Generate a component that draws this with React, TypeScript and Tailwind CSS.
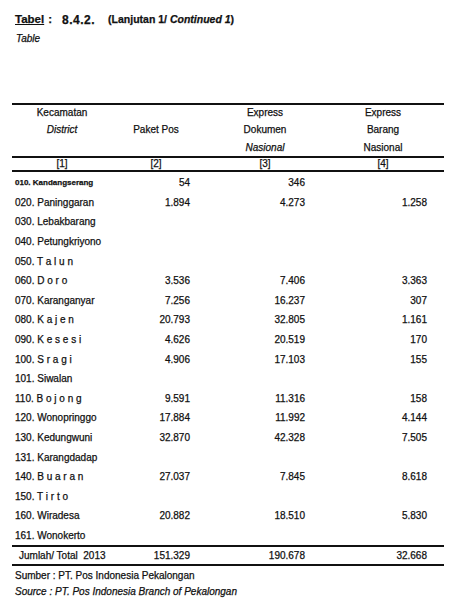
import React from "react";

const rows: [string, string, string, string][] = [
  ["020. Paninggaran", "1.894", "4.273", "1.258"],
  ["030. Lebakbarang", "", "", ""],
  ["040. Petungkriyono", "", "", ""],
  ["050. T a l u n", "", "", ""],
  ["060. D o r o", "3.536", "7.406", "3.363"],
  ["070. Karanganyar", "7.256", "16.237", "307"],
  ["080. K a j e n", "20.793", "32.805", "1.161"],
  ["090. K e s e s i", "4.626", "20.519", "170"],
  ["100. S r a g i", "4.906", "17.103", "155"],
  ["101. Siwalan", "", "", ""],
  ["110. B o j o n g", "9.591", "11.316", "158"],
  ["120. Wonopringgo", "17.884", "11.992", "4.144"],
  ["130. Kedungwuni", "32.870", "42.328", "7.505"],
  ["131. Karangdadap", "", "", ""],
  ["140. B u a r a n", "27.037", "7.845", "8.618"],
  ["150. T i r t o", "", "", ""],
  ["160. Wiradesa", "20.882", "18.510", "5.830"],
  ["161. Wonokerto", "", "", ""],
];

const grid = "grid grid-cols-[100px_88px_130px_106px]";

export default function App() {
  return (
    <div
      className="w-[460px] h-[610px] bg-white text-[#111] overflow-hidden [-webkit-text-stroke:0.25px_#111]"
      style={{ fontFamily: '"Liberation Sans", Arial, sans-serif' }}
    >
      <div className="pt-[12px] pl-[15px]">
        <div className="flex items-center h-[16px] font-bold">
          <span className="text-[11.5px] underline">Tabel</span>
          <span className="text-[11.5px] ml-[4px]">:</span>
          <span className="text-[12px] ml-[10px] tracking-[0.5px]">8.4.2.</span>
          <span className="text-[10.5px] ml-[13px]">
            (Lanjutan 1/ <i>Continued 1</i>)
          </span>
        </div>
        <div className="italic text-[10px] leading-[14px] mt-[4px] ml-[1px]">Table</div>
      </div>

      <div className="mx-[12px] mt-[57px] w-[432px]">
        <div className="h-[2px] bg-[#111]" />
        <div className={`${grid} grid-rows-[16px_18px_17px] text-[10px] leading-none`}>
          <div className="flex items-center justify-center">Kecamatan</div>
          <div />
          <div className="flex items-center justify-center">Express</div>
          <div className="flex items-center justify-center">Express</div>
          <div className="flex items-center justify-center italic">District</div>
          <div className="flex items-center justify-center">Paket Pos</div>
          <div className="flex items-center justify-center">Dokumen</div>
          <div className="flex items-center justify-center">Barang</div>
          <div />
          <div />
          <div className="flex items-center justify-center italic">Nasional</div>
          <div className="flex items-center justify-center">Nasional</div>
        </div>
        <div className="h-[2px] bg-[#111]" />
        <div className={`${grid} h-[12px] text-[10px] leading-none`}>
          <div className="flex items-center justify-center">[1]</div>
          <div className="flex items-center justify-center">[2]</div>
          <div className="flex items-center justify-center">[3]</div>
          <div className="flex items-center justify-center">[4]</div>
        </div>
        <div className="h-[2px] bg-[#111]" />

        <div className="pt-[1px] text-[10px]">
          <div className={`${grid} h-[19.6px] items-center`}>
            <div className="pl-[3px] text-[8px] font-bold whitespace-nowrap">010. Kandangserang</div>
            <div className="text-right pr-[10px]">54</div>
            <div className="text-right pr-[25px]">346</div>
            <div />
          </div>
          {rows.map((r) => (
            <div key={r[0]} className={`${grid} h-[19.6px] items-center`}>
              <div className="pl-[3px] whitespace-nowrap">{r[0]}</div>
              <div className="text-right pr-[10px]">{r[1]}</div>
              <div className="text-right pr-[25px]">{r[2]}</div>
              <div className="text-right pr-[9px]">{r[3]}</div>
            </div>
          ))}
        </div>

        <div className="h-[2px] bg-[#111]" />
        <div className={`${grid} h-[17px] items-center text-[10px]`}>
          <div className="pl-[7px] whitespace-nowrap">Jumlah/ Total&nbsp; 2013</div>
          <div className="text-right pr-[10px]">151.329</div>
          <div className="text-right pr-[25px]">190.678</div>
          <div className="text-right pr-[9px]">32.668</div>
        </div>
        <div className="h-[2px] bg-[#111]" />
      </div>

      <div className="pl-[15px] pt-[2px] text-[10px] leading-[16px]">
        <div>Sumber : PT. Pos Indonesia Pekalongan</div>
        <div className="italic">Source : PT. Pos Indonesia Branch of Pekalongan</div>
      </div>
    </div>
  );
}
